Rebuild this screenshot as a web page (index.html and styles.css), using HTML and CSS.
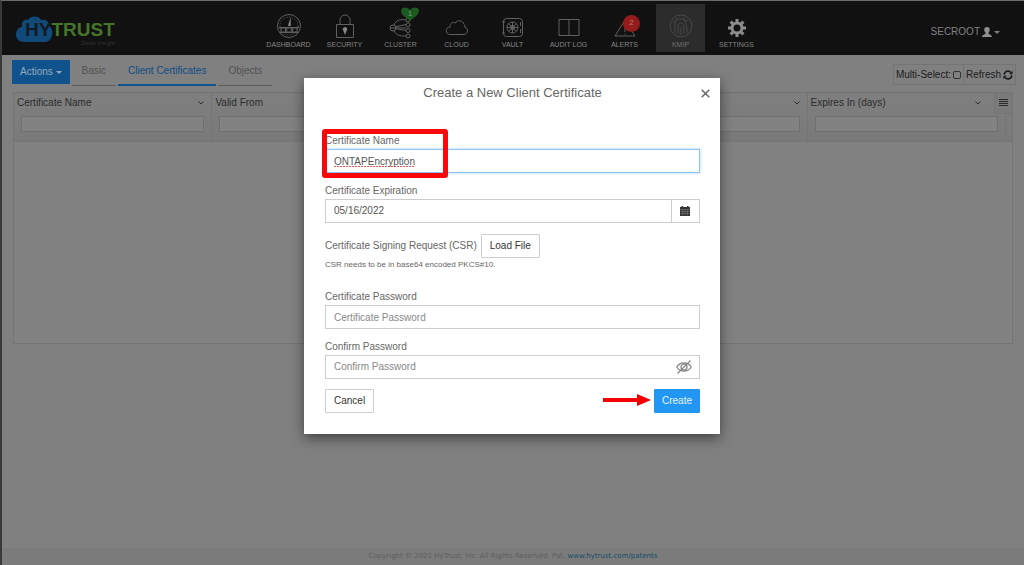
FILE: index.html
```html
<!DOCTYPE html>
<html lang="en">
<head>
<meta charset="utf-8">
<meta name="viewport" content="width=device-width, initial-scale=1">
<title>HyTrust KeyControl</title>
<link rel="stylesheet" href="styles.css">
</head>
<body>
<div class="page">
  <header class="topbar">
    <a class="logo" href="#" aria-label="HyTrust home">
      <svg class="logo-cloud" viewBox="0 0 38 27" aria-hidden="true"><path d="M8 26C3 26 0 23 0 18.500C0 14 3 11 6 11C5 6 8 3 12 4C14 0 22-1 25 4C30 3 33 6 33 10C36 12 37 15 36 19C35 24 32 26 29 26Z"/></svg>
      <span class="logo-name"><span class="logo-hy">HY</span><span class="logo-trust">TRUST</span></span>
      <span class="logo-tag">Deep Insight</span>
    </a>
    <nav class="nav">
      <a class="nav-item" href="#">
        <svg class="nav-icon" viewBox="0 0 26 26"><circle cx="13" cy="13" r="11.500"/><circle cx="13" cy="13" r="9" stroke-dasharray="1 1.500"/><path d="M3 14.500H23M4 19.500H22M5 15h4.500v4H5zM10.800 15h4.500v4h-4.500zM16.600 15h4.500v4h-4.500z"/><path class="solid" d="M12 13L14.500 4L14.800 13Z"/></svg>
        DASHBOARD</a>
      <a class="nav-item" href="#">
        <svg class="nav-icon" viewBox="0 0 26 26"><path d="M4.500 11.500h17v13h-17zM8 11V7a5 5 0 0 1 10 0v4"/><path class="solid" d="M13 14a2.300 2.300 0 0 1 1.500 4L13 22L11.500 18A2.300 2.300 0 0 1 13 14Z"/></svg>
        SECURITY</a>
      <a class="nav-item" href="#">
        <svg class="nav-icon" viewBox="0 0 26 26"><circle cx="5" cy="15" r="3"/><path d="M6 12C8 7 12 6 18 7M7 14L18 11.500M2 15H18M7 15.500L18 17.500M6 18C9 23 13 23 18 23"/><circle cx="20" cy="7" r="2"/><circle cx="20" cy="12" r="2"/><circle cx="20" cy="17.500" r="2"/><circle cx="20" cy="23" r="2"/></svg>
        CLUSTER
        <span class="badge badge-heart"><svg viewBox="0 0 18 14" aria-hidden="true"><path d="M9 14C6 11 0 8 0 4C0 0 6-1 9 3C12-1 18 0 18 4C18 8 12 11 9 14Z"/></svg><span>1</span></span>
      </a>
      <a class="nav-item" href="#">
        <svg class="nav-icon" viewBox="0 0 26 26"><path d="M6 21.500C1 21 1 14.500 6 14C6 10 9 8.500 11.500 10C13 6.500 19 7 20 11.500C21 12 21 13 20.500 14C25 15 24 21 20 21.500Z"/></svg>
        CLOUD</a>
      <a class="nav-item" href="#">
        <svg class="nav-icon" viewBox="0 0 26 26"><rect x="3.500" y="5.500" width="19" height="18" rx="3"/><circle cx="12.500" cy="14.500" r="5.500"/><circle cx="12.500" cy="14.500" r="2"/><path d="M12.500 9v11M7 14.500h11M8.600 10.600l7.800 7.800M16.400 10.600l-7.800 7.800M20.500 9v4M20.500 16v4M2 9h3M2 20h3"/></svg>
        VAULT</a>
      <a class="nav-item" href="#">
        <svg class="nav-icon" viewBox="0 0 26 26"><path d="M3 6.500h20v16H3zM13 6.500v16"/></svg>
        AUDIT LOG</a>
      <a class="nav-item" href="#">
        <svg class="nav-icon" viewBox="0 0 26 26"><path d="M13 7L23 23H3ZM13 15v4M13 20.500v1"/></svg>
        ALERTS
        <span class="badge badge-round">2</span>
      </a>
      <a class="nav-item active" href="#" aria-current="page">
        <svg class="nav-icon" viewBox="0 0 26 26"><circle cx="13" cy="13" r="11"/><path d="M7 20V13C7 6 11 5 13 6C18 7 19 11 19 20M10 21V13C10 9 15 9 16 13V21M13 14v8M5 8C7 10 8 9 9 5M20 7C18 9 17 8 15 4"/></svg>
        KMIP</a>
      <a class="nav-item" href="#">
        <svg class="nav-icon gear" viewBox="0 0 26 26"><circle cx="13" cy="15" r="5"/><path d="M13 6v4M13 20v4M4 15h4M18 15h4M6.600 8.600l3 3M16.400 18.400l3 3M19.400 8.600l-3 3M9.600 18.400l-3 3"/></svg>
        SETTINGS</a>
    </nav>
    <button class="user" type="button">SECROOT
      <svg viewBox="0 0 10 10" aria-hidden="true"><path d="M5 0C7 0 8 1 7.700 3C7.500 4.500 7 5.500 6.300 6C6.300 7.500 10 7.500 10 10H0C0 7.500 3.700 7.500 3.700 6C3 5.500 2.500 4.500 2.300 3C2 1 3 0 5 0Z"/></svg><span class="caret"></span>
    </button>
  </header>

  <main class="content">
    <div class="toolbar">
      <button class="actions" type="button">Actions <span class="caret"></span></button>
      <nav class="tabs">
        <a class="tab" href="#">Basic</a>
        <a class="tab selected" href="#">Client Certificates</a>
        <a class="tab" href="#">Objects</a>
      </nav>
      <div class="tools">
        <label class="tool" for="multi">Multi-Select: <input id="multi" type="checkbox"></label>
        <button class="tool" type="button">Refresh
          <svg viewBox="0 0 12 12" aria-hidden="true"><path d="M1.500 5.500A4.500 4.500 0 0 1 9.500 3M10.500 6.500A4.500 4.500 0 0 1 2.500 9"/><path class="solid" d="M11.500 1V5H7.500ZM.5 11V7H4.500Z"/></svg>
        </button>
      </div>
    </div>

    <div class="grid">
      <table class="certs">
        <thead>
          <tr>
            <th><div class="th-head">Certificate Name<svg class="chev" viewBox="0 0 6 4"><path d="M.5.5L3 3L5.500.5"/></svg></div><input type="text" aria-label="Filter by certificate name"></th>
            <th><div class="th-head">Valid From<svg class="chev" viewBox="0 0 6 4"><path d="M.5.5L3 3L5.500.5"/></svg></div><input type="text" aria-label="Filter by start date"></th>
            <th><div class="th-head"></div><input type="text" aria-label="Filter third column"></th>
            <th><div class="th-head"><svg class="chev" viewBox="0 0 6 4"><path d="M.5.5L3 3L5.500.5"/></svg></div><input type="text" aria-label="Filter fourth column"></th>
            <th><div class="th-head last">Expires In (days)<svg class="chev" viewBox="0 0 6 4"><path d="M.5.5L3 3L5.500.5"/></svg></div><input type="text" aria-label="Filter by days to expiry"></th>
            <th class="gutter"></th>
          </tr>
        </thead>
        <tbody><tr><td colspan="6"></td></tr></tbody>
      </table>
      <button class="grid-menu" type="button" aria-label="Grid menu"><svg viewBox="0 0 9 8"><path d="M0 .5h9M0 2.500h9M0 4.500h9M0 6.500h9"/></svg></button>
    </div>
  </main>

  <footer class="footer">Copyright © 2021 HyTrust, Inc. All Rights Reserved. Pat. <a href="#">www.hytrust.com/patents</a></footer>
</div>

<div class="overlay">
  <form class="modal" role="dialog" aria-labelledby="modal-title">
    <div class="modal-head">
      <h1 class="modal-title" id="modal-title">Create a New Client Certificate</h1>
      <button class="close" type="button" aria-label="Close"><svg viewBox="0 0 9 9"><path d="M.7.700L8.300 8.300M8.300.700L.7 8.300"/></svg></button>
    </div>
    <div class="field">
      <label for="name">Certificate Name</label>
      <input class="box focused misspelt" id="name" type="text" value="ONTAPEncryption" spellcheck="false">
      <span class="highlight"></span>
    </div>
    <div class="field">
      <label for="expiry">Certificate Expiration</label>
      <div class="box group">
        <input id="expiry" type="text" value="05/16/2022">
        <button class="calendar" type="button" aria-label="Pick a date"><svg viewBox="0 0 10 10"><path class="solid" d="M0 1h1.500V0h1.500v1h4V0h1.500v1H10v9H0z"/><path d="M0 3.500h10M.5 5.500h9M.5 7.500h9M2.500 4v5.500M5 4v5.500M7.500 4v5.500"/></svg></button>
      </div>
    </div>
    <div class="csr">
      <div class="csr-row">
        <label for="load">Certificate Signing Request (CSR)</label>
        <button class="btn" id="load" type="button">Load File</button>
      </div>
      <p class="help">CSR needs to be in base64 encoded PKCS#10.</p>
    </div>
    <div class="field">
      <label for="pass">Certificate Password</label>
      <input class="box" id="pass" type="password" placeholder="Certificate Password">
    </div>
    <div class="field">
      <label for="confirm">Confirm Password</label>
      <div class="box group">
        <input id="confirm" type="password" placeholder="Confirm Password">
        <button class="reveal" type="button" aria-label="Show password"><svg viewBox="0 0 16 14"><path d="M.8 7C4 1.500 12 1.500 15.200 7C12 12.500 4 12.500.8 7Z"/><circle cx="8" cy="7" r="3"/><path d="M14.500.5L1.500 13.500"/></svg></button>
      </div>
    </div>
    <div class="modal-foot">
      <button class="btn" type="button">Cancel</button>
      <svg class="arrow" viewBox="0 0 48 12" aria-hidden="true"><path d="M0 4H34V0L48 6L34 12V8H0Z"/></svg>
      <button class="btn primary" type="submit">Create</button>
    </div>
  </form>
</div>
</body>
</html>
```
FILE: styles.css
```css
* { box-sizing: border-box; }

body {
  margin: 0;
  background: #808080;
  color: #2c2c2c;
  font: 10px/16px "Liberation Sans", Arial, sans-serif;
}

button, input {
  margin: 0;
  padding: 0;
  border: 0;
  border-radius: 0;
  background: none;
  color: inherit;
  font: inherit;
}

input { min-width: 0; outline: 0; }
a { color: inherit; text-decoration: none; }
svg { display: block; fill: none; stroke: currentColor; }
.solid { fill: currentColor; stroke: none; }

.page {
  display: flex;
  flex-direction: column;
  min-height: 100vh;
  border-left: 2px solid #3a3a3a;
  border-top: 1px solid #6c6c6c;
}

/* Top bar */
.topbar {
  display: flex;
  align-items: flex-start;
  height: 54px;
  padding: 3px 24px 0 14px;
  background: #111;
  color: #858585;
}

.logo {
  position: relative;
  flex: none;
  width: 245px;
  height: 48px;
  padding: 16px 0 0 9px;
}
.logo-cloud {
  position: absolute;
  left: 0;
  top: 12px;
  width: 38px;
  height: 27px;
  fill: #114a78;
  stroke: none;
}
.logo-name {
  position: relative;
  display: block;
  font-size: 19px;
  font-weight: bold;
  line-height: 20px;
}
.logo-hy { color: #111b24; }
.logo-trust { color: #457528; }
.logo-tag {
  display: block;
  width: 90px;
  color: #333;
  font-size: 6px;
  line-height: 6px;
  text-align: right;
}

.nav { display: flex; gap: 7px; padding-left: 3px; }
.nav-item {
  position: relative;
  display: flex;
  flex-direction: column;
  align-items: center;
  width: 49px;
  height: 48px;
  padding-top: 9px;
  font-size: 7px;
  line-height: 12px;
  white-space: nowrap;
}
.nav-icon { width: 26px; height: 26px; stroke: #606060; color: #888; }
.nav-item .solid { stroke: none; }
.gear { stroke: #8c8c8c; stroke-width: 3; }
.active { background: #2c2c2c; color: #707070; }
.active .nav-icon { stroke: #484848; }

.badge { position: absolute; color: #7f9a7f; text-align: center; font-size: 8px; }
.badge-heart { left: 25px; top: 3px; width: 18px; height: 14px; }
.badge-heart svg { width: 18px; height: 14px; fill: #1c5a20; stroke: none; }
.badge-heart span { position: absolute; inset: 1px 0 0; }
.badge-round {
  left: 23px;
  top: 11px;
  width: 17px;
  height: 17px;
  border-radius: 50%;
  background: #961c1c;
  color: #b08080;
  line-height: 16px;
}

.user {
  display: flex;
  align-items: center;
  gap: 2px;
  margin: 20px 0 0 auto;
  color: #808080;
}
.user svg { width: 10px; height: 10px; fill: #909090; stroke: none; }
.caret {
  display: inline-block;
  border: 3px solid transparent;
  border-top-color: currentColor;
  border-bottom: 0;
  vertical-align: middle;
}

/* Toolbar */
.content { flex: 1; padding: 5px 11px 0 10px; }
.toolbar { display: flex; align-items: flex-start; gap: 2px; margin-right: -3px; }
.actions {
  height: 24px;
  padding: 0 8px;
  background: #10538c;
  color: #93a9bd;
}
.tabs { display: flex; gap: 2px; color: #505050; }
.tab { height: 26px; padding: 3px 10px 0; border-bottom: 1px solid #5c5c5c; }
.tab.selected { border-bottom: 2px solid #105590; color: #0d4d85; }
.tools { display: flex; margin: 4px 0 0 auto; border: 1px solid #747474; }
.tool {
  display: flex;
  align-items: center;
  gap: 2px;
  height: 19px;
  padding: 0 2px;
  color: #1c1c1c;
}
.tool + .tool { border-left: 1px solid #747474; }
.tool input {
  width: 8px;
  height: 8px;
  border: 1px solid #333;
  border-radius: 2px;
  appearance: none;
}
.tool svg { width: 10px; height: 10px; stroke-width: 2; }

/* Certificate grid */
.grid { position: relative; margin: 6px 0 0 1px; }
.certs {
  width: 100%;
  border: 1px solid #757575;
  border-collapse: collapse;
  table-layout: fixed;
}
.certs th {
  height: 49px;
  padding: 2px 7px 8px;
  border-right: 1px solid #757575;
  border-bottom: 1px solid #757575;
  background: linear-gradient(#7f7f7f, #797979);
  font-weight: normal;
  text-align: left;
  vertical-align: top;
}
.certs th.gutter { width: 7px; padding: 0; }
.certs td { height: 202px; padding: 0; background: #828282; }
.th-head {
  display: flex;
  align-items: center;
  justify-content: space-between;
  height: 16px;
  margin: 0 0 5px -4px;
}
.th-head.last { padding-right: 17px; }
.chev { width: 6px; height: 4px; margin-left: auto; }
.certs input {
  display: block;
  width: 100%;
  height: 16px;
  border: 1px solid #6f6f6f;
  background: #828282;
}
.grid-menu {
  position: absolute;
  top: 0;
  right: 0;
  width: 19px;
  height: 22px;
  padding: 0 4px;
  border: 1px solid #757575;
  background: #7a7a7a;
}
.grid-menu svg { width: 9px; height: 8px; }

.footer {
  padding-bottom: 1px;
  background: #7b7b7b;
  color: #5e5e5e;
  font: 7px/16px "DejaVu Sans", Verdana, sans-serif;
  text-align: center;
}
.footer a { color: #0f4e68; }

/* Dialog */
.overlay {
  position: absolute;
  inset: 0;
  display: flex;
  align-items: flex-start;
  justify-content: center;
  padding-top: 78px;
}
.modal {
  display: flex;
  flex-direction: column;
  gap: 10px;
  width: 416px;
  max-width: 100%;
  padding: 0 20px 21px 21px;
  background: #fff;
  box-shadow: 0 4px 12px rgba(0, 0, 0, .5);
  color: #666;
}
.modal-head { position: relative; height: 45px; padding-top: 6px; }
.modal-title {
  margin: 0;
  font-size: 13px;
  font-weight: normal;
  line-height: 17px;
  text-align: center;
}
.close { position: absolute; top: 11px; right: -10px; }
.close svg { width: 9px; height: 9px; stroke: #666; stroke-width: 1.500; }

.field { position: relative; display: flex; flex-direction: column; }
.box { height: 24px; padding: 0 8px; border: 1px solid #ccc; color: #555; }
.box::placeholder, .box input::placeholder { color: #888; opacity: 1; }
.focused { border-color: #8cc4f3; box-shadow: 0 0 3px #a5d2f7; }
.misspelt {
  background: repeating-linear-gradient(90deg, #e55 0 2px, #fff 2px 3px) 8px 16px / 80px 1px no-repeat;
}
.group { display: flex; padding-right: 0; }
.group input { flex: 1; }
.calendar { width: 28px; padding-left: 8px; border-left: 1px solid #ccc; color: #333; }
.calendar svg { width: 10px; height: 10px; stroke: #777; stroke-width: .6; }
.calendar .solid { stroke: none; }
.reveal { padding: 0 7px; color: #888; }
.reveal svg { width: 16px; height: 14px; stroke-width: 1.300; }
.highlight {
  position: absolute;
  top: -4px;
  left: -3px;
  width: 126px;
  height: 49px;
  border: 5px solid #f80808;
  border-radius: 3px;
  pointer-events: none;
}

.csr { padding: 1px 0 7px; }
.csr-row { display: flex; align-items: center; gap: 4px; }
.help { margin: 0; font-size: 8px; line-height: 14px; }
.btn {
  height: 24px;
  padding: 0 8px;
  border: 1px solid #ccc;
  border-radius: 1px;
  background: #fff;
  color: #333;
}
.primary { padding: 0 7px; border-color: #2196f3; background: #2196f3; color: #e8f4ff; }
.modal-foot { display: flex; align-items: center; gap: 3px; }
.arrow { width: 48px; height: 12px; margin: 0 0 3px auto; fill: #f40000; stroke: none; }
```
